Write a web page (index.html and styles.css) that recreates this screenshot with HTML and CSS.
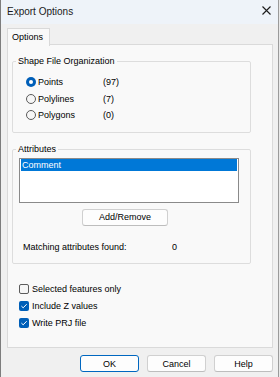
FILE: index.html
```html
<!DOCTYPE html>
<html>
<head>
<meta charset="utf-8">
<link rel="stylesheet" href="styles.css">
</head>
<body>
<div class="window">
  <div class="titlebar">
    <span class="title">Export Options</span>
    <svg class="close" width="9" height="9" viewBox="0 0 9 9"><path d="M0.5 0.5L8.5 8.5M8.5 0.5L0.5 8.5" stroke="#1c1c1c" stroke-width="1.1"/></svg>
  </div>
  <div class="content">
    <div class="tabs"><div class="tab">Options</div></div>
    <div class="panel">
      <fieldset class="group g1">
        <legend>Shape File Organization</legend>
        <div class="radio-row"><span class="radio on"></span><span class="rlbl">Points</span><span class="count">(97)</span></div>
        <div class="radio-row"><span class="radio"></span><span class="rlbl">Polylines</span><span class="count">(7)</span></div>
        <div class="radio-row"><span class="radio"></span><span class="rlbl">Polygons</span><span class="count">(0)</span></div>
      </fieldset>
      <fieldset class="group g2">
        <legend>Attributes</legend>
        <div class="listbox"><div class="item sel">Comment</div></div>
        <button class="btn add">Add/Remove</button>
        <div class="match"><span class="mlbl">Matching attributes found:</span><span class="num">0</span></div>
      </fieldset>
      <div class="checks">
        <div class="check-row"><span class="cb"></span><span>Selected features only</span></div>
        <div class="check-row"><span class="cb on"><svg width="8" height="8" viewBox="0 0 8 8"><path d="M1.4 4.1L3.2 5.8L6.7 2.2" fill="none" stroke="#fff" stroke-width="1"/></svg></span><span>Include Z values</span></div>
        <div class="check-row"><span class="cb on"><svg width="8" height="8" viewBox="0 0 8 8"><path d="M1.4 4.1L3.2 5.8L6.7 2.2" fill="none" stroke="#fff" stroke-width="1"/></svg></span><span>Write PRJ file</span></div>
      </div>
    </div>
    <div class="buttons">
      <button class="btn def">OK</button>
      <button class="btn">Cancel</button>
      <button class="btn">Help</button>
    </div>
  </div>
</div>
</body>
</html>
```

FILE: styles.css
```css
html, body {
  margin: 0;
  padding: 0;
}
body {
  width: 280px;
  height: 377px;
  overflow: hidden;
  background: #e9e9e9;
  font-family: "Liberation Sans", Arial, sans-serif;
  font-size: 9px;
  color: #000;
}
.window {
  width: 279px;
  height: 377px;
  box-sizing: border-box;
  border-left: 1px solid #7d7d7d;
  border-right: 1px solid #9a9a9a;
  background: #f0f0f0;
}
.titlebar {
  height: 24px;
  background: #eef3f9;
  display: flex;
  align-items: center;
  justify-content: space-between;
  padding: 0 7px 0 6px;
}
.title {
  font-size: 10px;
  color: #1a1a1a;
  line-height: 12px;
}
.close {
  display: block;
  margin-top: -3px;
}
.content {
  padding: 4px 0 0 6px;
}
.tabs {
  display: flex;
  height: 17px;
  margin-bottom: -1px;
  position: relative;
  z-index: 1;
}
.tab {
  width: 43px;
  height: 18px;
  box-sizing: border-box;
  border: 1px solid #d9d9d9;
  border-bottom: none;
  background: #f9f9f9;
  padding-left: 4px;
  line-height: 16px;
}
.panel {
  width: 266px;
  height: 304px;
  box-sizing: border-box;
  border: 1px solid #dadada;
  background: #f9f9f9;
  padding: 11px 0 0 4px;
}
.group {
  margin: 0;
  width: 239px;
  box-sizing: border-box;
  border: 1px solid #dddddd;
  border-radius: 2px;
  padding: 7px 0 8px 3px;
}
.group legend {
  padding: 0 2px;
  line-height: 11px;
}
.radio-row {
  height: 16.5px;
  display: flex;
  align-items: center;
  margin-left: 10px;
}
.radio {
  width: 10px;
  height: 10px;
  box-sizing: border-box;
  border-radius: 50%;
  border: 1px solid #5a5a5a;
  background: #f6f6f6;
  margin-right: 2px;
  position: relative;
}
.radio.on {
  border: none;
  background: #005fb8;
}
.radio.on::after {
  content: "";
  position: absolute;
  left: 3px;
  top: 3px;
  width: 4px;
  height: 4px;
  border-radius: 50%;
  background: #fff;
}
.rlbl {
  width: 65px;
}
.g2 {
  margin-top: 11px;
  padding: 3px 0 9.5px 3px;
}
.listbox {
  width: 220px;
  height: 45px;
  box-sizing: border-box;
  border: 1px solid #8a8a8a;
  background: #fff;
  margin-left: 3px;
  padding: 0 1px;
}
.item {
  height: 12px;
  line-height: 12px;
  padding-left: 1px;
}
.item.sel {
  background: #0078d7;
  color: #fff;
}
.btn {
  font-family: "Liberation Sans", Arial, sans-serif;
  font-size: 9px;
  color: #000;
  height: 17px;
  box-sizing: border-box;
  border: 1px solid #d0d0d0;
  border-bottom-color: #bdbdbd;
  border-radius: 3px;
  background: #fdfdfd;
  padding: 0;
  margin: 0;
  display: block;
}
.add {
  width: 86px;
  margin: 6px 0 0 66px;
}
.match {
  display: flex;
  height: 11px;
  line-height: 11px;
  margin: 16.5px 0 0 7px;
}
.mlbl {
  width: 149px;
}
.checks {
  margin: 16.5px 0 0 7px;
}
.check-row {
  height: 17px;
  display: flex;
  align-items: center;
}
.cb {
  width: 10px;
  height: 10px;
  box-sizing: border-box;
  border: 1px solid #5c5c5c;
  border-radius: 2px;
  background: #f6f6f6;
  margin-right: 3px;
  display: flex;
  align-items: center;
  justify-content: center;
}
.cb.on {
  border: none;
  background: #005fb8;
}
.cb svg {
  display: block;
}
.buttons {
  display: flex;
  gap: 8px;
  margin: 7px 0 0 73px;
}
.buttons .btn {
  width: 59px;
}
.btn.def {
  border: 1px solid #0067c0;
}
```
